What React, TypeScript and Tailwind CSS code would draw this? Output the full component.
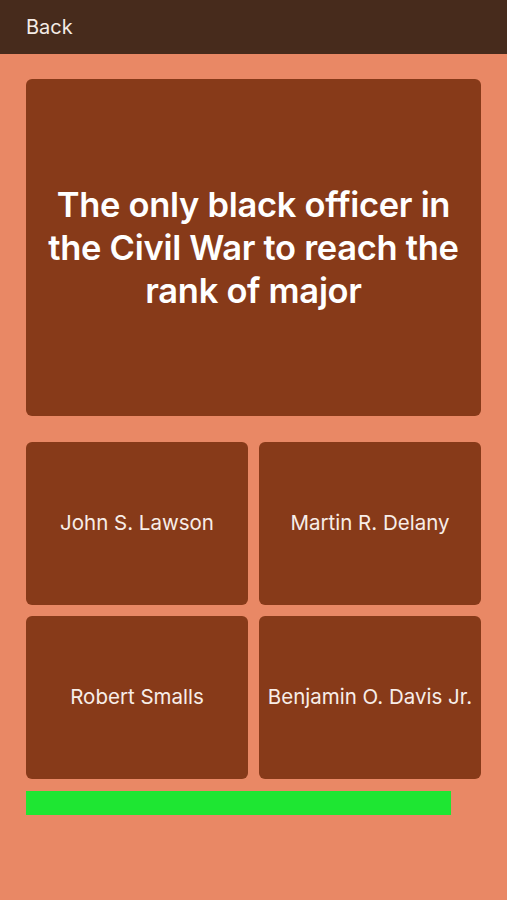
import React from "react";

const answers = ["John S. Lawson", "Martin R. Delany", "Robert Smalls", "Benjamin O. Davis Jr."];

export default function App() {
  return (
    <div className="min-h-[900px] w-full bg-[#e98865] font-['Inter',sans-serif]">
      {/* Nav bar */}
      <div className="flex h-[54px] items-center bg-[#472b1c] px-[26px]">
        <span className="text-[20px] text-[#f4ece6]">Back</span>
      </div>

      <div className="flex flex-col px-[26px] pt-[25px]">
        {/* Question */}
        <div className="flex h-[337px] items-center justify-center rounded-[6px] bg-[#873a19] px-3">
          <p className="text-center text-[34.5px] font-semibold leading-[43px] tracking-[-0.3px] text-white">
            The only black officer in the Civil War to reach the rank of major
          </p>
        </div>

        {/* Answers */}
        <div className="mt-[26px] grid grid-cols-2 gap-[11px]">
          {answers.map((a) => (
            <button
              key={a}
              className="flex h-[163px] items-center justify-center rounded-[6px] bg-[#873a19] px-1 text-[20.5px] text-[#f7ede8]"
            >
              {a}
            </button>
          ))}
        </div>

        {/* Timer bar */}
        <div className="mt-[12px] h-[24px] w-full">
          <div className="h-full bg-[#1ee632]" style={{ width: "93.4%" }} />
        </div>
      </div>
    </div>
  );
}
